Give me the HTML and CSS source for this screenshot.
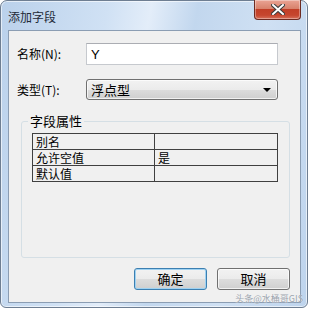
FILE: index.html
```html
<!DOCTYPE html>
<html lang="zh-CN">
<head>
  <meta charset="UTF-8">
  <title>添加字段</title>
  <link rel="stylesheet" href="styles.css">
</head>
<body>
  <div class="window">
    <div class="titlebar">
      <span class="title">添加字段</span>
      <button class="close" type="button" aria-label="关闭">
        <svg width="14" height="11" viewBox="0 0 14 11">
          <path d="M2 1 L12 10 M12 1 L2 10" stroke="#3b3b3b" stroke-width="4" stroke-linecap="square"/>
          <path d="M2 1 L12 10 M12 1 L2 10" stroke="#ffffff" stroke-width="2" stroke-linecap="square"/>
        </svg>
      </button>
    </div>
    <div class="client">
      <div class="field">
        <label for="name">名称(N):</label>
        <input id="name" class="text-input" type="text" value="Y">
      </div>
      <div class="field field-type">
        <label>类型(T):</label>
        <div class="combo">
          <span>浮点型</span>
          <span class="arrow"></span>
        </div>
      </div>
      <fieldset class="group">
        <legend>字段属性</legend>
        <table class="props">
          <tr><td>别名</td><td></td></tr>
          <tr><td>允许空值</td><td>是</td></tr>
          <tr><td>默认值</td><td></td></tr>
        </table>
      </fieldset>
      <div class="buttons">
        <button class="btn btn-default" type="button">确定</button>
        <button class="btn" type="button">取消</button>
      </div>
    </div>
    <span class="watermark">头条@水桶哥GIS</span>
  </div>
</body>
</html>
```

FILE: styles.css
```css
body {
  margin: 0;
  background: #ffffff;
  font-family: "Noto Sans CJK SC", "Liberation Sans", sans-serif;
  font-size: 12px;
  color: #000;
}
.window {
  position: relative;
  box-sizing: border-box;
  width: 308px;
  height: 308px;
  border: 1px solid #6e7e92;
  border-radius: 7px 7px 6px 6px;
  background: linear-gradient(100deg, #bad1eb 0%, #d0e1f4 30%, #e3edf9 42%, #c2d7ee 55%, #cfe0f3 75%, #bed4ed 100%);
  padding: 0 6px 4px 7px;
  display: flex;
  flex-direction: column;
  box-shadow: inset 0 0 0 1px rgba(255, 255, 255, 0.6);
}
.titlebar {
  height: 29px;
  display: flex;
  align-items: flex-start;
  justify-content: space-between;
}
.title {
  margin-top: 8px;
  font-size: 12px;
  line-height: 16px;
  color: #1e2a38;
}
.close {
  width: 47px;
  height: 20px;
  margin-top: -1px;
  padding: 0;
  border: 1px solid #6d2b22;
  border-top: none;
  border-radius: 0 0 4px 4px;
  background: linear-gradient(#eaa494 0%, #d8826c 45%, #c23f27 50%, #c6462e 80%, #d6705a 100%);
  box-shadow: inset 0 0 0 1px rgba(255, 255, 255, 0.35);
  display: flex;
  align-items: center;
  justify-content: center;
}
.client {
  flex: 1;
  border: 1px solid #8b9db3;
  background: #f0f0f0;
  display: flex;
  flex-direction: column;
}
.field {
  display: flex;
  align-items: center;
  margin: 12px 22px 0 8px;
  height: 22px;
}
.field-type {
  margin-top: 14px;
  height: 21px;
}
.field label {
  width: 69px;
  flex: none;
  line-height: 16px;
}
.text-input {
  flex: 1;
  box-sizing: border-box;
  height: 22px;
  margin: 0;
  border: 1px solid #c6c9ce;
  border-top-color: #abadb3;
  background: #fff;
  padding: 0 4px;
  font-family: "Liberation Sans", sans-serif;
  font-size: 13px;
  outline: none;
}
.combo {
  flex: 1;
  box-sizing: border-box;
  height: 21px;
  border: 1px solid #707070;
  border-radius: 3px;
  background: linear-gradient(#f2f2f2 0%, #ebebeb 50%, #dddddd 50%, #cfcfcf 100%);
  box-shadow: inset 0 0 0 1px rgba(255, 255, 255, 0.7);
  display: flex;
  align-items: center;
  justify-content: space-between;
  padding: 0 6px 0 4px;
  font-size: 13px;
}
.arrow {
  width: 0;
  height: 0;
  border-left: 4px solid transparent;
  border-right: 4px solid transparent;
  border-top: 4px solid #000;
}
.group {
  margin: 13px 10px 0 12px;
  padding: 0 10px 75px 10px;
  border: 1px solid #d5dfe5;
  border-radius: 3px;
  min-width: 0;
}
.group legend {
  margin-left: -4px;
  padding: 0 2px;
  line-height: 16px;
  font-size: 13px;
}
.props {
  width: 246px;
  margin-top: 4px;
  border-collapse: collapse;
}
.props td {
  border: 1px solid #404040;
  height: 15px;
  padding: 0 3px;
  line-height: 15px;
  font-size: 12px;
  overflow: hidden;
}
.props td:first-child {
  width: 115px;
}
.buttons {
  display: flex;
  justify-content: flex-end;
  gap: 10px;
  margin: 10px 10px 0 0;
}
.btn {
  box-sizing: border-box;
  width: 73px;
  height: 22px;
  margin: 0;
  padding: 0;
  border: 1px solid #707070;
  border-radius: 3px;
  background: linear-gradient(#f2f2f2 0%, #ebebeb 50%, #dddddd 50%, #cfcfcf 100%);
  box-shadow: inset 0 0 0 1px rgba(255, 255, 255, 0.7);
  font-family: "Noto Sans CJK SC", sans-serif;
  font-size: 13px;
  line-height: 18px;
}
.btn-default {
  border-color: #3c7fb1;
  box-shadow: inset 0 0 0 1px #9fd2f2;
}
.watermark {
  position: absolute;
  right: 4px;
  bottom: 3px;
  font-size: 9px;
  line-height: 10px;
  color: #9aa3ad;
  text-shadow: 0 0 1px #fff;
}
```
